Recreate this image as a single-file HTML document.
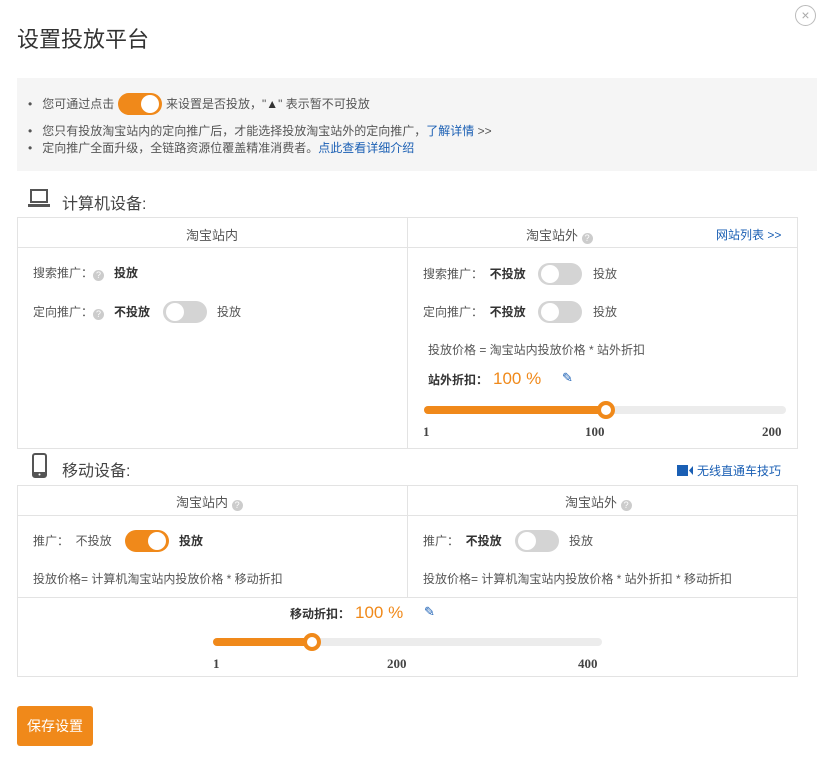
<!DOCTYPE html>
<html><head><meta charset="utf-8"><style>
*{margin:0;padding:0;box-sizing:border-box}
body{width:834px;height:761px;background:#fff;font-family:"Liberation Sans","Noto Sans CJK SC",sans-serif;color:#333;position:relative;overflow:hidden;font-size:12px}
.a{position:absolute;white-space:nowrap}
.t{line-height:16px}
.g{color:#555}
.b{font-weight:bold;color:#333}
.lk{color:#1a5fb4}
.tog{position:absolute;width:44px;height:22px;border-radius:11px;background:#d4d4d4}
.tog i{position:absolute;top:2px;width:18px;height:18px;border-radius:50%;background:#fff}
.tog.on{background:#f0891a}
.tog.on i{right:3px}
.tog.off i{left:3px}
.q{display:inline-block;width:11px;height:11px;border-radius:50%;background:#ccc;color:#fff;font-size:9px;line-height:11px;text-align:center;vertical-align:-1px}
.tbl{position:absolute;border:1px solid #e3e3e3}
.hl{position:absolute;height:1px;background:#e3e3e3}
.vl{position:absolute;width:1px;background:#e3e3e3}
.track{position:absolute;height:8px;border-radius:4px;background:#ececec}
.fill{position:absolute;height:8px;border-radius:4px;background:#f0891a}
.knob{position:absolute;width:18px;height:18px;border-radius:50%;background:#fff;border:4px solid #f0891a}
.num{font-family:"Liberation Serif",serif;font-weight:bold;font-size:13px;color:#444}
.pct{color:#f0891a;font-size:17px}
</style></head><body>
<div class="a" style="left:17px;top:22px;font-size:22px;color:#333">设置投放平台</div>
<div class="a" style="left:795px;top:5px;width:21px;height:21px;border:1px solid #bbb;border-radius:50%;color:#aaa;text-align:center;line-height:18px;font-size:14px">×</div>

<div class="a" style="left:17px;top:78px;width:800px;height:93px;background:#f5f5f5"></div>
<div class="a t g" style="left:28px;top:96px">•&nbsp;&nbsp; 您可通过点击</div>
<div class="tog on" style="left:118px;top:93px"><i></i></div>
<div class="a t g" style="left:166px;top:96px">来设置是否投放，"<b style="color:#333">▲</b>" 表示暂不可投放</div>
<div class="a t g" style="left:28px;top:123px">•&nbsp;&nbsp; 您只有投放淘宝站内的定向推广后，才能选择投放淘宝站外的定向推广，<span class="lk">了解详情</span> &gt;&gt;</div>
<div class="a t g" style="left:28px;top:140px">•&nbsp;&nbsp; 定向推广全面升级，全链路资源位覆盖精准消费者。<span class="lk">点此查看详细介绍</span></div>

<svg class="a" style="left:28px;top:189px" width="22" height="20" viewBox="0 0 22 20"><rect x="3" y="1" width="16" height="12" fill="none" stroke="#555" stroke-width="2"/><rect x="0" y="15" width="22" height="3" fill="#555"/></svg>
<div class="a" style="left:62px;top:190px;font-size:16px;color:#444">计算机设备:</div>

<div class="tbl" style="left:17px;top:217px;width:781px;height:232px"></div>
<div class="hl" style="left:17px;top:247px;width:780px"></div>
<div class="vl" style="left:407px;top:217px;height:231px"></div>
<div class="a t g" style="left:186px;top:228px;font-size:13px">淘宝站内</div>
<div class="a t g" style="left:526px;top:228px;font-size:13px">淘宝站外 <span class="q">?</span></div>
<div class="a t lk" style="left:716px;top:227px">网站列表 &gt;&gt;</div>

<div class="a t g" style="left:33px;top:265px">搜索推广：<span class="q">?</span>&nbsp;&nbsp; <span class="b">投放</span></div>
<div class="a t g" style="left:33px;top:304px">定向推广：<span class="q">?</span>&nbsp;&nbsp; <span class="b">不投放</span></div>
<div class="tog off" style="left:163px;top:301px"><i></i></div>
<div class="a t g" style="left:217px;top:304px">投放</div>

<div class="a t g" style="left:423px;top:266px">搜索推广：&nbsp; <span class="b">不投放</span></div>
<div class="tog off" style="left:538px;top:263px"><i></i></div>
<div class="a t g" style="left:593px;top:266px">投放</div>
<div class="a t g" style="left:423px;top:304px">定向推广：&nbsp; <span class="b">不投放</span></div>
<div class="tog off" style="left:538px;top:301px"><i></i></div>
<div class="a t g" style="left:593px;top:304px">投放</div>
<div class="a t g" style="left:428px;top:342px">投放价格 = 淘宝站内投放价格 * 站外折扣</div>
<div class="a b" style="left:428px;top:371px">站外折扣：</div>
<div class="a pct" style="left:493px;top:369px">100 %</div>
<div class="a lk" style="left:562px;top:370px;font-size:13px">✎</div>
<div class="track" style="left:424px;top:406px;width:362px"></div>
<div class="fill" style="left:424px;top:406px;width:182px"></div>
<div class="knob" style="left:597px;top:401px"></div>
<div class="a num" style="left:423px;top:424px">1</div>
<div class="a num" style="left:585px;top:424px">100</div>
<div class="a num" style="left:762px;top:424px">200</div>

<svg class="a" style="left:32px;top:453px" width="15" height="25" viewBox="0 0 15 25"><rect x="1" y="1" width="13" height="23" rx="2" fill="none" stroke="#555" stroke-width="2"/><rect x="1" y="19" width="13" height="5" fill="#555"/><circle cx="7.5" cy="21.5" r="1" fill="#fff"/></svg>
<div class="a" style="left:62px;top:457px;font-size:16px;color:#444">移动设备:</div>
<svg class="a" style="left:677px;top:465px" width="16" height="11" viewBox="0 0 16 11"><rect x="0" y="0" width="11" height="11" fill="#1a5fb4"/><polygon points="12,5.5 16,1 16,10" fill="#1a5fb4"/></svg>
<div class="a t lk" style="left:697px;top:463px">无线直通车技巧</div>

<div class="tbl" style="left:17px;top:485px;width:781px;height:192px"></div>
<div class="hl" style="left:17px;top:515px;width:780px"></div>
<div class="hl" style="left:17px;top:597px;width:780px"></div>
<div class="vl" style="left:407px;top:485px;height:112px"></div>
<div class="a t g" style="left:176px;top:495px;font-size:13px">淘宝站内 <span class="q">?</span></div>
<div class="a t g" style="left:565px;top:495px;font-size:13px">淘宝站外 <span class="q">?</span></div>

<div class="a t g" style="left:33px;top:533px">推广：&nbsp; 不投放</div>
<div class="tog on" style="left:125px;top:530px"><i></i></div>
<div class="a t b" style="left:179px;top:533px">投放</div>
<div class="a t g" style="left:33px;top:571px">投放价格= 计算机淘宝站内投放价格 * 移动折扣</div>

<div class="a t g" style="left:423px;top:533px">推广：&nbsp; <span class="b">不投放</span></div>
<div class="tog off" style="left:515px;top:530px"><i></i></div>
<div class="a t g" style="left:569px;top:533px">投放</div>
<div class="a t g" style="left:423px;top:571px">投放价格= 计算机淘宝站内投放价格 * 站外折扣 * 移动折扣</div>

<div class="a b" style="left:290px;top:605px">移动折扣：</div>
<div class="a pct" style="left:355px;top:603px">100 %</div>
<div class="a lk" style="left:424px;top:604px;font-size:13px">✎</div>
<div class="track" style="left:213px;top:638px;width:389px"></div>
<div class="fill" style="left:213px;top:638px;width:99px"></div>
<div class="knob" style="left:303px;top:633px"></div>
<div class="a num" style="left:213px;top:656px">1</div>
<div class="a num" style="left:387px;top:656px">200</div>
<div class="a num" style="left:578px;top:656px">400</div>

<div class="a" style="left:17px;top:706px;width:76px;height:40px;background:#f0891a;border-radius:3px;color:#fff;font-size:14px;line-height:40px;text-align:center">保存设置</div>
</body></html>
